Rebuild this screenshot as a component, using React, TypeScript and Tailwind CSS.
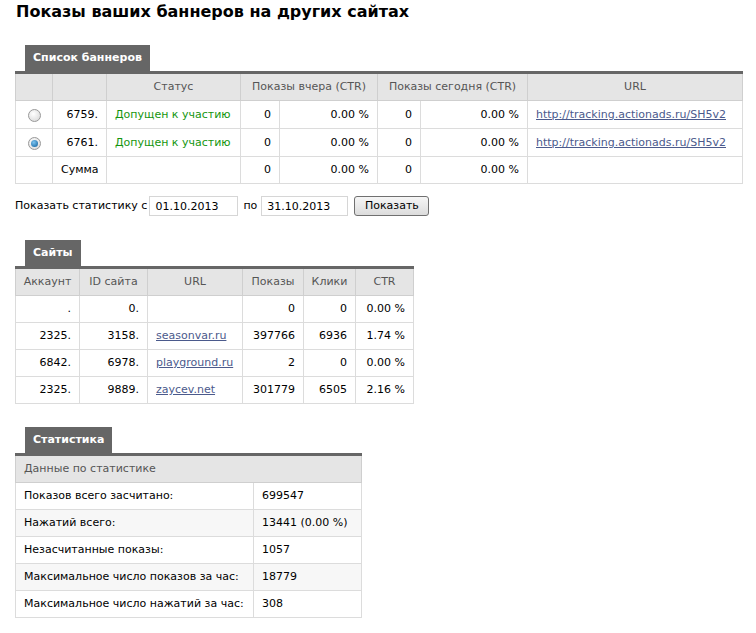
import React from "react";

const Radio = ({ checked }: { checked?: boolean }) => (
  <span className="inline-block w-[13px] h-[13px] rounded-full border border-[#9a9a9a] bg-[radial-gradient(circle_at_40%_35%,#ffffff,#d4d4d4)] align-middle relative">
    {checked && (
      <span className="absolute left-[2px] top-[2px] w-[7px] h-[7px] rounded-full bg-[radial-gradient(circle_at_40%_35%,#7cc4f0,#0b5c9a)]" />
    )}
  </span>
);

const Tab = ({ children }: { children: React.ReactNode }) => (
  <div className="flex">
    <div className="ml-[10px] h-[26px] px-[8px] bg-[#666666] text-white font-bold flex items-center">{children}</div>
  </div>
);

const th = "border border-[#cfcfcf] border-t-[#666666] bg-[#e5e5e5] text-[#555555] font-normal text-center leading-[16px] py-[5px] px-[6px]";
const td = "border border-[#dcdcdc] leading-[17px] py-[5px] px-[8px]";
const td27 = "border border-[#dcdcdc] leading-[16px] py-[5px] px-[8px]";
const link = "text-[#4b5a8c] underline";
const ff = { fontFamily: '"DejaVu Sans", Verdana, sans-serif' };

export default function App() {
  return (
    <div className="bg-white min-h-[633px] pl-[15px] pt-[2px] text-[11px] text-black" style={ff}>
      <h1 className="text-[16px] font-bold leading-[20px] ml-[1px] mb-[23px]">Показы ваших баннеров на других сайтах</h1>

      <Tab>Список баннеров</Tab>
      <table className="table-fixed border-collapse w-[727px] border-t-[3px] border-t-[#666666]">
        <colgroup>
          <col className="w-[37px]" />
          <col className="w-[54px]" />
          <col className="w-[134px]" />
          <col className="w-[39px]" />
          <col className="w-[98px]" />
          <col className="w-[43px]" />
          <col className="w-[107px]" />
          <col className="w-[215px]" />
        </colgroup>
        <thead>
          <tr>
            <th className={th}></th>
            <th className={th}></th>
            <th className={th}>Статус</th>
            <th className={th} colSpan={2}>Показы вчера (CTR)</th>
            <th className={th} colSpan={2}>Показы сегодня (CTR)</th>
            <th className={th}>URL</th>
          </tr>
        </thead>
        <tbody>
          {[
            { id: "6759.", checked: false },
            { id: "6761.", checked: true },
          ].map((r) => (
            <tr key={r.id}>
              <td className={td + " text-center"}><Radio checked={r.checked} /></td>
              <td className={td + " text-right"}>{r.id}</td>
              <td className={td + " text-[#14960f]"}>Допущен к участию</td>
              <td className={td + " text-right"}>0</td>
              <td className={td + " text-right"}>0.00 %</td>
              <td className={td + " text-right"}>0</td>
              <td className={td + " text-right"}>0.00 %</td>
              <td className={td}><a className={link} href="#">http://tracking.actionads.ru/SH5v2</a></td>
            </tr>
          ))}
          <tr>
            <td className={td27}></td>
            <td className={td27 + " text-right"}>Сумма</td>
            <td className={td27}></td>
            <td className={td27 + " text-right"}>0</td>
            <td className={td27 + " text-right"}>0.00 %</td>
            <td className={td27 + " text-right"}>0</td>
            <td className={td27 + " text-right"}>0.00 %</td>
            <td className={td27}></td>
          </tr>
        </tbody>
      </table>

      <div className="flex items-center mt-[12px] h-[20px]">
        <span>Показать статистику с</span>
        <input readOnly value="01.10.2013" className="ml-[2px] w-[89px] h-[20px] border border-[#d6d6d6] px-[5px] text-[11px] text-black outline-none" style={ff} />
        <span className="ml-[5px]">по</span>
        <input readOnly value="31.10.2013" className="ml-[4px] w-[87px] h-[20px] border border-[#d6d6d6] px-[5px] text-[11px] text-black outline-none" style={ff} />
        <button className="ml-[6px] w-[75px] h-[20px] rounded-[3px] border border-[#707070] bg-[linear-gradient(#f6f6f6,#dcdcdc)] text-[11px] text-black" style={ff}>Показать</button>
      </div>

      <div className="mt-[24px]">
        <Tab>Сайты</Tab>
        <table className="table-fixed border-collapse w-[398px] border-t-[3px] border-t-[#666666]">
          <colgroup>
            <col className="w-[64px]" />
            <col className="w-[68px]" />
            <col className="w-[95px]" />
            <col className="w-[61px]" />
            <col className="w-[52px]" />
            <col className="w-[58px]" />
          </colgroup>
          <thead>
            <tr>
              {["Аккаунт", "ID сайта", "URL", "Показы", "Клики", "CTR"].map((h) => (
                <th key={h} className={th + " px-[4px]"}>{h}</th>
              ))}
            </tr>
          </thead>
          <tbody>
            {[
              [".", "0.", "", "0", "0", "0.00 %"],
              ["2325.", "3158.", "seasonvar.ru", "397766", "6936", "1.74 %"],
              ["6842.", "6978.", "playground.ru", "2", "0", "0.00 %"],
              ["2325.", "9889.", "zaycev.net", "301779", "6505", "2.16 %"],
            ].map((r, i) => (
              <tr key={i}>
                <td className={td27 + " text-right"}>{r[0]}</td>
                <td className={td27 + " text-right"}>{r[1]}</td>
                <td className={td27}>{r[2] && <a className={link} href="#">{r[2]}</a>}</td>
                <td className={td27 + " text-right"}>{r[3]}</td>
                <td className={td27 + " text-right"}>{r[4]}</td>
                <td className={td27 + " text-right"}>{r[5]}</td>
              </tr>
            ))}
          </tbody>
        </table>
      </div>

      <div className="mt-[23px]">
        <Tab>Статистика</Tab>
        <table className="table-fixed border-collapse w-[346px] border-t-[3px] border-t-[#666666]">
          <colgroup>
            <col className="w-[238px]" />
            <col className="w-[108px]" />
          </colgroup>
          <thead>
            <tr>
              <th colSpan={2} className={th + " text-left px-[8px] leading-[15px]"}>Данные по статистике</th>
            </tr>
          </thead>
          <tbody>
            {[
              ["Показов всего засчитано:", "699547"],
              ["Нажатий всего:", "13441 (0.00 %)"],
              ["Незасчитанные показы:", "1057"],
              ["Максимальное число показов за час:", "18779"],
              ["Максимальное число нажатий за час:", "308"],
            ].map((r, i) => (
              <tr key={i} className={i % 2 === 1 ? "bg-[#f7f7f7]" : "bg-white"}>
                <td className={td27}>{r[0]}</td>
                <td className={td27}>{r[1]}</td>
              </tr>
            ))}
          </tbody>
        </table>
      </div>
    </div>
  );
}
